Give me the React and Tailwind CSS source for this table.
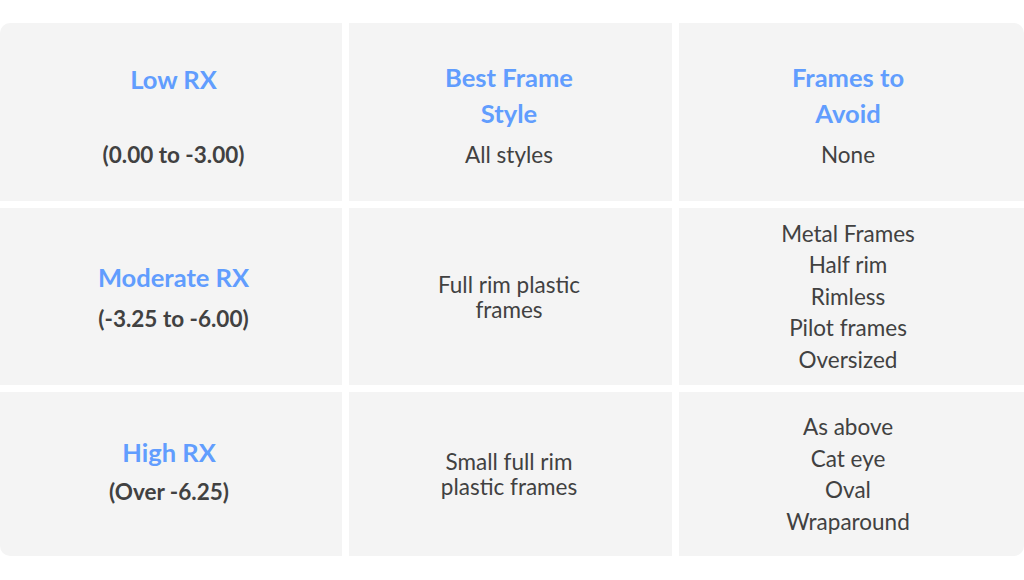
import React from "react";

const H = ({ children }) => (
  <div className="text-[25.5px] leading-[36px] font-bold text-[#619dfe]">{children}</div>
);

const Cell = ({ className = "", children }) => (
  <div className={"bg-[#f4f4f4] flex flex-col items-center justify-center text-center " + className}>
    {children}
  </div>
);

const Lines = ({ items }) => (
  <div className="text-[22.5px] leading-[31.5px] text-[#414141]">
    {items.map((t) => (
      <div key={t}>{t}</div>
    ))}
  </div>
);

export default function App() {
  return (
    <div
      className="w-[1024px] h-[580px] bg-white pt-[23px]"
      style={{ fontFamily: "Lato, 'Open Sans', sans-serif" }}
    >
      <div className="grid grid-cols-[342px_323px_345px] grid-rows-[178px_177px_164px] gap-[7px]">
        {/* Row 1 */}
        <Cell className="rounded-tl-[10px] pt-[7px] pl-[5px]">
          <H>Low RX</H>
          <div className="h-[42px]" />
          <div className="text-[22.5px] leading-[31.5px] font-bold text-[#414141]">(0.00 to -3.00)</div>
        </Cell>
        <Cell className="pt-[6px] pr-[3px]">
          <H>
            Best Frame
            <br />
            Style
          </H>
          <div className="mt-[8px] text-[22.5px] leading-[31.5px] text-[#414141]">All styles</div>
        </Cell>
        <Cell className="rounded-tr-[10px] pt-[6px] pr-[7px]">
          <H>
            Frames to
            <br />
            Avoid
          </H>
          <div className="mt-[8px] text-[22.5px] leading-[31.5px] text-[#414141]">None</div>
        </Cell>

        {/* Row 2 */}
        <Cell className="pl-[5px]">
          <H>Moderate RX</H>
          <div className="mt-[8px] text-[22.5px] leading-[31.5px] font-bold text-[#414141]">(-3.25 to -6.00)</div>
        </Cell>
        <Cell className="pr-[3px]">
          <div className="text-[22.5px] leading-[25px] text-[#414141]">
            Full rim plastic
            <br />
            frames
          </div>
        </Cell>
        <Cell className="pr-[7px]">
          <Lines items={["Metal Frames", "Half rim", "Rimless", "Pilot frames", "Oversized"]} />
        </Cell>

        {/* Row 3 */}
        <Cell className="rounded-bl-[10px] pb-[6px] pr-[4px]">
          <H>High RX</H>
          <div className="mt-[6px] text-[22.5px] leading-[31.5px] font-bold text-[#414141]">(Over -6.25)</div>
        </Cell>
        <Cell className="pr-[3px]">
          <div className="text-[22.5px] leading-[25px] text-[#414141]">
            Small full rim
            <br />
            plastic frames
          </div>
        </Cell>
        <Cell className="rounded-br-[10px] pr-[7px]">
          <Lines items={["As above", "Cat eye", "Oval", "Wraparound"]} />
        </Cell>
      </div>
    </div>
  );
}
